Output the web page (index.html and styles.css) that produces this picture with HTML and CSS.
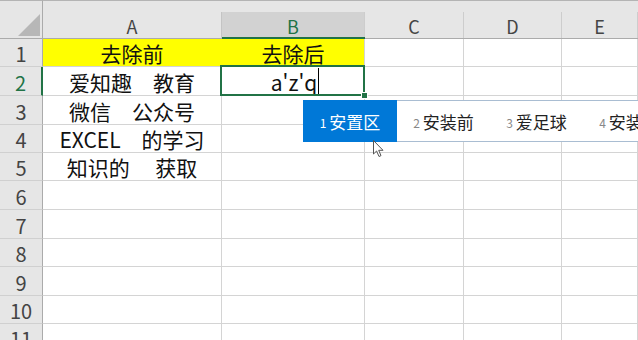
FILE: index.html
```html
<!DOCTYPE html>
<html lang="zh-CN">
<head>
    <meta charset="UTF-8">
    <title>去除空格</title>
    <link rel="stylesheet" href="styles.css">
</head>
<body>
    <div class="sheet">
        <!-- 列标题 -->
        <div class="corner"><span class="tri"></span></div>
        <div class="colhead"><div class="lab">A</div></div>
        <div class="colhead sel"><div class="lab">B</div></div>
        <div class="colhead"><div class="lab">C</div></div>
        <div class="colhead"><div class="lab">D</div></div>
        <div class="colhead"><div class="lab">E</div></div>

        <div class="rowhead">1</div>
        <div class="c yellow first">去除前</div>
        <div class="c yellow">去除后</div>
        <div class="c"></div><div class="c"></div><div class="c"></div>

        <div class="rowhead sel">2</div>
        <div class="c">爱知趣　教育</div>
        <div class="c active"><span class="ime">a'z'q</span><span class="caret"></span></div>
        <div class="c"></div><div class="c"></div><div class="c"></div>

        <div class="rowhead">3</div>
        <div class="c">微信　公众号</div>
        <div class="c"></div><div class="c"></div><div class="c"></div><div class="c"></div>

        <div class="rowhead">4</div>
        <div class="c">EXCEL　的学习</div>
        <div class="c"></div><div class="c"></div><div class="c"></div><div class="c"></div>

        <div class="rowhead">5</div>
        <div class="c">知识的　 获取</div>
        <div class="c"></div><div class="c"></div><div class="c"></div><div class="c"></div>

        <div class="rowhead">6</div>
        <div class="c"></div><div class="c"></div><div class="c"></div><div class="c"></div><div class="c"></div>
        <div class="rowhead">7</div>
        <div class="c"></div><div class="c"></div><div class="c"></div><div class="c"></div><div class="c"></div>
        <div class="rowhead">8</div>
        <div class="c"></div><div class="c"></div><div class="c"></div><div class="c"></div><div class="c"></div>
        <div class="rowhead">9</div>
        <div class="c"></div><div class="c"></div><div class="c"></div><div class="c"></div><div class="c"></div>
        <div class="rowhead">10</div>
        <div class="c"></div><div class="c"></div><div class="c"></div><div class="c"></div><div class="c"></div>
        <div class="rowhead">11</div>
        <div class="c"></div><div class="c"></div><div class="c"></div><div class="c"></div><div class="c"></div>
    </div>

    <!-- 输入法候选框 -->
    <div class="imebox">
        <div class="cand on"><span class="num">1</span>安置区</div>
        <div class="cand"><span class="num">2</span>安装前</div>
        <div class="cand"><span class="num">3</span>爱足球</div>
        <div class="cand"><span class="num">4</span>安装后</div>
    </div>

    <svg class="pointer" width="12" height="18" viewBox="0 0 12 18">
        <path d="M0.5 0.5 L0.5 14 L3.6 11 L6 16.5 L8 15.6 L5.7 10.3 L10 10.3 Z" fill="#fff" stroke="#555" stroke-width="1"/>
    </svg>
</body>
</html>
```

FILE: styles.css
```css
body {
    margin: 0;
    width: 638px;
    height: 340px;
    overflow: hidden;
    position: relative;
    background: #fff;
    font-family: "Noto Sans CJK SC", "Noto Sans", sans-serif;
}
.sheet {
    display: grid;
    grid-template-columns: 43px 179px 143px 99px 98px 76px;
    grid-template-rows: 39px 28px 29px 29px 28px 28px 29px 29px 28px 29px 28px 28px;
}
.corner, .colhead {
    background: #e6e6e6;
    border-top: 1px solid #b4b4b4;
    border-bottom: 1px solid #ababab;
    box-sizing: border-box;
    padding-top: 11px;
}
.corner {
    border-right: 1px solid #ababab;
    position: relative;
}
.tri {
    position: absolute;
    right: 2px;
    bottom: 2px;
    width: 0;
    height: 0;
    border-left: 22px solid transparent;
    border-bottom: 22px solid #b7b7b7;
}
.colhead .lab {
    height: 100%;
    border-right: 1px solid #cdcdcd;
    box-sizing: border-box;
    display: flex;
    align-items: center;
    justify-content: center;
    font-size: 18px;
    color: #444;
    padding-top: 2px;
}
.colhead.sel {
    border-bottom: 2px solid #217346;
}
.colhead.sel .lab {
    background: #d2d2d2;
    color: #217346;
    border-left: 1px solid #c4c4c4;
    margin-left: -1px;
}
.rowhead {
    background: #e6e6e6;
    border-right: 1px solid #ababab;
    border-bottom: 1px solid #d0d0d0;
    box-sizing: border-box;
    display: flex;
    align-items: center;
    justify-content: center;
    font-size: 20px;
    color: #444;
    padding-top: 2px;
}
.rowhead.sel {
    color: #217346;
    border-right: 2px solid #217346;
}
.c {
    border-right: 1px solid #d4d4d4;
    border-bottom: 1px solid #d4d4d4;
    box-sizing: border-box;
    display: flex;
    align-items: flex-end;
    justify-content: center;
    font-size: 21px;
    line-height: 25px;
    color: #111;
    white-space: pre;
}
.yellow {
    background: #ffff00;
}
.yellow.first {
    border-right-color: #ffff00;
}
.active {
    position: relative;
    padding-left: 4px;
}
.active::after {
    content: "";
    position: absolute;
    left: -2px;
    top: -2px;
    right: -1px;
    bottom: -1px;
    border: 2px solid #217346;
}
.active::before {
    content: "";
    position: absolute;
    right: -4px;
    bottom: -4px;
    width: 5px;
    height: 5px;
    background: #217346;
    border: 1px solid #fff;
    z-index: 1;
}
.ime {
    text-decoration: underline dotted #888;
    text-underline-offset: 3px;
}
.caret {
    display: inline-block;
    width: 0;
    height: 26px;
    border-left: 1px solid #000;
    margin-left: 1px;
    margin-bottom: 1px;
}
.imebox {
    position: absolute;
    left: 303px;
    top: 100px;
    width: 380px;
    height: 42px;
    box-sizing: border-box;
    background: #fff;
    border: 1px solid #a9bdd2;
    display: flex;
}
.cand {
    width: 93px;
    display: flex;
    align-items: center;
    justify-content: center;
    font-size: 17px;
    color: #222;
    white-space: nowrap;
}
.cand .num {
    font-size: 12px;
    color: #888;
    margin-right: 3px;
    padding-top: 2px;
}
.cand.on {
    background: #0078d7;
    color: #fff;
    margin: -1px 0 -1px -1px;
    width: 94px;
}
.cand.on .num {
    color: #fff;
}
.pointer {
    position: absolute;
    left: 373px;
    top: 140px;
}
```
